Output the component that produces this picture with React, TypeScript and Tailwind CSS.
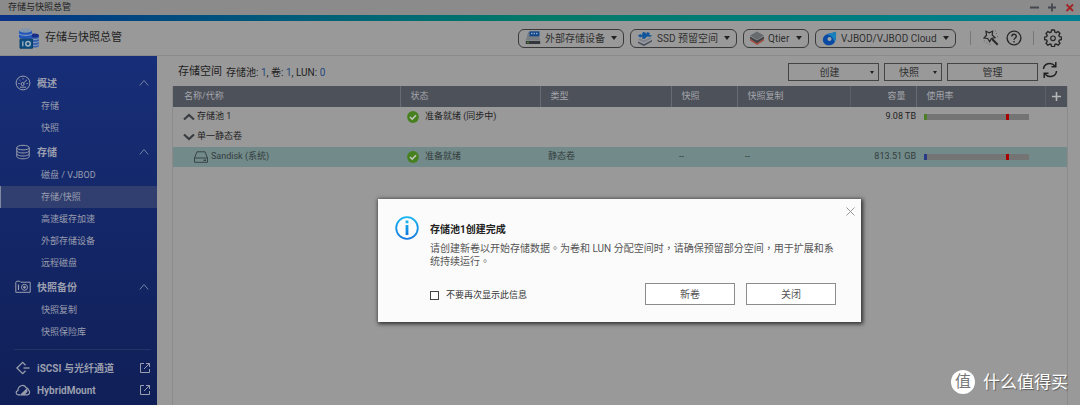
import React from "react";

type IconProps = { className?: string };

const latinFirst = "font-['Roboto','Noto_Sans_CJK_SC',sans-serif]";

function Gauge() {
  return (
    <svg viewBox="0 0 16 16" className="size-4" fill="none" stroke="currentColor" aria-hidden="true">
      <circle cx="8" cy="8" r="6.9" />
      <path d="M3.2 8.6h1.4M4.4 5l.9.8M8 3.2v1.3M11.4 8.6h1.4" />
      <circle cx="7.6" cy="9" r="1.5" />
      <path d="M8.7 7.9 12 4.8M5 12.2h6" />
    </svg>
  );
}

function Disks() {
  return (
    <svg viewBox="0 0 16 16" className="size-4" fill="none" stroke="currentColor" aria-hidden="true">
      <ellipse cx="8" cy="3.6" rx="6.2" ry="2.3" />
      <path d="M1.8 3.6v9c0 1.2 2.8 2.2 6.2 2.2s6.2-1 6.2-2.2v-9" />
      <path d="M1.8 6.7C1.8 7.9 4.6 9 8 9s6.2-1.1 6.2-2.3M1.8 9.700c0 1.2 2.8 2.3 6.200 2.300s6.200-1.100 6.200-2.300" />
    </svg>
  );
}

function Backup() {
  return (
    <svg viewBox="0 0 16 16" className="size-4" fill="none" stroke="currentColor" aria-hidden="true">
      <path d="M.8 13.300V3.200l1-1h3l1 1h9.400v10.100z" />
      <path d="M3.500 5.500v5.500" strokeWidth="1.200" />
      <circle cx="9.500" cy="8.300" r="3" />
      <circle cx="9.500" cy="8.300" r="1" fill="currentColor" />
    </svg>
  );
}

function Iscsi() {
  return (
    <svg viewBox="0 0 16 16" className="size-4" fill="none" stroke="currentColor" strokeWidth="1.300" aria-hidden="true">
      <path d="M10.500 5.200 7.700 2.300 1.900 8l5.800 5.700 2.800-2.900" />
      <path d="M8.500 8h6" />
    </svg>
  );
}

function Hybrid() {
  return (
    <svg viewBox="0 0 16 16" className="size-4" fill="none" stroke="currentColor" strokeWidth="1.200" aria-hidden="true">
      <path d="M5 12.800H3.200C.6 12.400.4 9.200 2.900 8.600 3 3.500 8.800 1.700 11 5.600c1.800.2 2.400 1.300 2.700 2.700 1.700 1.400.9 4.300-1.300 4.500H8.800" />
      <path d="m6 12.800 5.800-5.700v2.500l-3 3.200z" fill="currentColor" />
    </svg>
  );
}

function External() {
  return (
    <svg viewBox="0 0 12 12" className="size-3" fill="none" stroke="currentColor" aria-hidden="true">
      <path d="M5 1.500H1.500v9h9V7M7 1.500h3.500V5M10.500 1.500 5 7" />
    </svg>
  );
}

function Chevron({ className }: IconProps) {
  return (
    <svg viewBox="0 0 10 8" className={className} fill="none" stroke="currentColor" aria-hidden="true">
      <path d="m.8 6.500 4.200-5 4.200 5" />
    </svg>
  );
}

function FoldArrow({ down = false }: { down?: boolean }) {
  return (
    <svg viewBox="0 0 12 8" className="h-2 w-3 shrink-0" fill="none" stroke="#393c40" strokeWidth="2.200" aria-hidden="true">
      <path d={down ? "M1 1.500 6 6l5-4.500" : "M1 6.500 6 2l5 4.500"} />
    </svg>
  );
}

function Logo() {
  return (
    <svg viewBox="0 0 20 21" className="h-[21px] w-5" aria-hidden="true">
      <path d="M10 7v11c1 2 9 2 10 0V7z" fill="#3a62ac" />
      <ellipse cx="15" cy="7.500" rx="5" ry="2" fill="#172b88" />
      <path d="M13 11c2 .8 5 .7 7-.5M13 14c2 .8 5 .7 7-.5M13 17c2 .8 5 .7 7-.5" stroke="#8aa0bd" fill="none" />
      <path d="M0 2.500v7c1 2 12 2 13 0v-7z" fill="#2356b8" />
      <ellipse cx="6.500" cy="2.500" rx="6.500" ry="2.200" fill="#8096ae" />
      <path d="M0 5.800c2 2 11 2 13 0" stroke="#7e9bc0" strokeWidth="1.200" fill="none" />
      <path d="M1 11.200h12.500v9H1z" fill="#0c4d80" stroke="#08416f" />
      <path d="M3.800 13.300v5" stroke="#a0b3c0" strokeWidth="1.300" />
      <circle cx="9" cy="15.700" r="2.200" stroke="#a0b3c0" strokeWidth="1.500" fill="none" />
    </svg>
  );
}

function DriveChip() {
  return (
    <svg viewBox="0 0 16 14" className="h-[14px] w-4" aria-hidden="true">
      <path d="M3.200 1h10l2 8.500H.8z" fill="#777d82" />
      <path d="M.8 10h14.400v3H.8z" fill="#33373b" />
      <path d="M4.500.3h10v5h-10z" fill="#12468b" />
      <path d="M6 2.500h1.500M8.500 2.500H10M11 2.500h1.500" stroke="#8ba5c5" strokeWidth="1.500" />
      <path d="M2.300 11.500h1.400" stroke="#56a622" strokeWidth="1.400" />
    </svg>
  );
}

function SsdChip() {
  return (
    <svg viewBox="0 0 16 15" className="h-[15px] w-4" aria-hidden="true">
      <path d="m1 10.500 6 2.800L15 9v1.500L7 15l-6-3z" fill="#454c5e" />
      <path d="m1 8.500 6 3L15 7l-2-.5L7 9.500 3 7.500z" fill="#7b828e" />
      <path d="M1 4.500 3.500 3l1 1.500L6 1l2.500.5L9 3l1.500-2L13 2.300 12 4l3 .2-1.500 1.600L10 5.500 7.500 8 5 7.500 5.500 5.500 3 6.500z" fill="#10559b" />
    </svg>
  );
}

function QtierChip() {
  return (
    <svg viewBox="0 0 14 14" className="size-[14px]" aria-hidden="true">
      <path d="m0 7.500 7 4 7-4v2L7 14 0 9.500z" fill="#a14f43" />
      <path d="m0 5.500 7 4 7-4v2L7 12 0 7.500z" fill="#3a3e43" />
      <path d="m0 4.500 7-4 7 4-7 4.500z" fill="#686b6e" />
    </svg>
  );
}

function CloudChip() {
  return (
    <svg viewBox="0 0 15 15" className="size-[15px]" aria-hidden="true">
      <path d="M14 .7C14 5 15 14.300 7 14.300.2 14.300-.8 6.500 3.500 4 6.500 1.800 10 2.700 14 .7z" fill="#0b4aa2" />
      <path d="M14 .7C14 4 14.500 8 12.500 11 11 6 9 4.500 5 3.200 8 2 11 2.200 14 .7z" fill="#1781bd" />
      <circle cx="7.500" cy="8" r="2" fill="#9ea7ae" />
    </svg>
  );
}

function Wand() {
  return (
    <svg viewBox="0 0 16 16" className="size-4" fill="none" stroke="#282828" strokeWidth="1.200" aria-hidden="true">
      <path d="m3 1.300 3.200 1.600L9.600 1.200 9.200 4.900 12 7.600l-3.700.8-1.600 3.400-2-3.300-3.700-.4 2.500-2.900z" />
      <path d="m9 9 5.700 5.700" strokeWidth="2" />
      <path d="M13 3.500h1M14 6.500h1M12 1h1M3.500 13h1M.8 11h1M6.500 14.500h1" strokeWidth="1" stroke="#666" />
    </svg>
  );
}

function Help() {
  return (
    <svg viewBox="0 0 16 16" className="size-4" fill="none" stroke="#282828" strokeWidth="1.400" aria-hidden="true">
      <circle cx="8" cy="8" r="6.900" />
      <path d="M5.800 6.500C5.800 3.500 10.300 3.500 10.300 6.300 10.300 8 8 8 8 9.800M8 11v1.500" />
    </svg>
  );
}

function Gear() {
  return (
    <svg viewBox="0 0 18 18" className="size-[18px]" fill="none" stroke="#282828" strokeWidth="1.400" strokeLinejoin="round" aria-hidden="true">
      <path d="M7.600 1h2.800l.5 2.200 1.300.5 1.900-1.200 1.900 1.900-1.200 1.900.5 1.300 2.200.5v2.400l-2.200.6-.5 1.300 1.200 1.900-1.900 1.900-1.900-1.200-1.300.5-.5 2.200H7.600l-.5-2.200-1.300-.5-1.900 1.200L2 14.300l1.200-1.900-.5-1.300-2.200-.6V8.100l2.200-.5.5-1.300L2 4.400l1.900-1.900 1.900 1.200 1.300-.5z" />
      <circle cx="9" cy="9.300" r="2.300" strokeWidth="1.200" />
    </svg>
  );
}

function Refresh() {
  return (
    <svg viewBox="0 0 16 18" className="h-[18px] w-4" fill="none" stroke="#222" strokeWidth="1.500" aria-hidden="true">
      <path d="M1.500 8C1.800 2.500 9 .3 13 5M13.800 1v4.700H9.500M14.500 10C14.200 15.500 7 17.700 3 13M2.200 17v-4.700h4.300" />
    </svg>
  );
}

function Check() {
  return (
    <svg viewBox="0 0 12 12" className="size-3 shrink-0" aria-hidden="true">
      <circle cx="6" cy="6" r="5.900" fill="#47801f" />
      <path d="m3 6 2.200 2.200L9 4.200" stroke="#c0c8bb" strokeWidth="1.600" fill="none" />
    </svg>
  );
}

function Drive() {
  return (
    <svg viewBox="0 0 14 12" className="h-3 w-[14px] shrink-0" fill="none" stroke="#39444a" aria-hidden="true">
      <path d="M.5 7 3 .8h8L13.500 7v4.300H.5zM.5 7h13" />
      <path d="M9.500 9.300H12" strokeWidth="1.500" />
    </svg>
  );
}

function Caret({ small = false }: { small?: boolean }) {
  return (
    <span
      aria-hidden="true"
      className={
        small
          ? "size-0 border-x-2 border-t-[3px] border-x-transparent border-t-[#222]"
          : "size-0 border-x-[3px] border-t-4 border-x-transparent border-t-[#222]"
      }
    />
  );
}

const groups = [
  { title: "概述", icon: <Gauge />, items: ["存储", "快照"] },
  { title: "存储", icon: <Disks />, items: ["磁盘 / VJBOD", "存储/快照", "高速缓存加速", "外部存储设备", "远程磁盘"] },
  { title: "快照备份", icon: <Backup />, items: ["快照复制", "快照保险库"] },
];

function Sidebar() {
  return (
    <nav className="w-[157px] shrink-0 bg-linear-to-b from-[#172e78] to-[#101f57] pt-[14px] text-[#9a9eae]">
      {groups.map((g) => (
        <section key={g.title}>
          <button className="flex h-[25px] w-full items-center pr-2 pl-[15px] text-[10px] font-bold">
            {g.icon}
            <span className="ml-[6px] flex-1 pt-px text-left">{g.title}</span>
            <Chevron className="h-2 w-[10px] text-[#7480a3]" />
          </button>
          <ul>
            {g.items.map((item) => (
              <li key={item}>
                <a
                  href="#"
                  className={
                    item === "存储/快照"
                      ? "flex h-[22px] items-center border-l border-[#8087a0] bg-[#303f6f] pt-[2px] pl-10 text-[9px]"
                      : "flex h-[22px] items-center pt-[2px] pl-[41px] text-[9px]"
                  }
                >
                  {item}
                </a>
              </li>
            ))}
          </ul>
        </section>
      ))}
      <div className="mx-[6px] mt-[6px] ml-[14px] border-t border-[#243365] pt-[7px]">
        {[
          { name: "iSCSI 与光纤通道", icon: <Iscsi /> },
          { name: "HybridMount", icon: <Hybrid /> },
        ].map((l) => (
          <a key={l.name} href="#" className="flex h-[22px] items-center pl-px text-[10px] font-bold">
            {l.icon}
            <span className="ml-[6px] flex-1">{l.name}</span>
            <External />
          </a>
        ))}
      </div>
    </nav>
  );
}

function Chip({ icon, label, width }: { icon: React.ReactNode; label: string; width: string }) {
  return (
    <button className={`flex h-[19px] items-center rounded-md border border-[#3a3a3a] pr-[6px] pl-[6px] text-[10px] text-[#303030] ${width}`}>
      {icon}
      <span className="flex-1 pl-1 text-left whitespace-nowrap">{label}</span>
      <Caret />
    </button>
  );
}

function Usage({ color }: { color: string }) {
  return (
    <div className="flex h-[6px] w-[105px] bg-[#747474]">
      <span className={`w-[3px] ${color}`} />
      <span className="ml-[79px] w-[3px] bg-[#a80000]" />
    </div>
  );
}

function StorageTable() {
  const head = "border-l border-[#686c75] pt-px pl-[10px] text-left font-normal";
  return (
    <table className="w-full table-fixed border-collapse text-[9px] whitespace-nowrap text-[#222]">
      <colgroup>
        <col />
        <col className="w-[140px]" />
        <col className="w-[131px]" />
        <col className="w-[66px]" />
        <col className="w-[113px]" />
        <col className="w-[66px]" />
        <col className="w-[129px]" />
        <col className="w-[22px]" />
      </colgroup>
      <thead className="bg-[#4d515a] text-[#a4a6ab]">
        <tr className="h-[21px]">
          <th className="pt-px pl-[11px] text-left font-normal">名称/代称</th>
          <th className={head}>状态</th>
          <th className={head}>类型</th>
          <th className={head}>快照</th>
          <th className={head}>快照复制</th>
          <th className="border-l border-[#5b5f68] pt-px pr-[10px] text-right font-normal">容量</th>
          <th className={head}>使用率</th>
          <th className="border-l border-[#5b5f68]">
            <button aria-label="添加列" className="flex w-full items-center justify-center">
              <svg viewBox="0 0 9 9" className="size-[9px]" stroke="#b5b6b8" strokeWidth="1.600" aria-hidden="true">
                <path d="M4.500 0v9M0 4.500h9" />
              </svg>
            </button>
          </th>
        </tr>
      </thead>
      <tbody>
        <tr className="h-5">
          <td className="pl-[10px]">
            <div className="flex items-center gap-[2px]"><FoldArrow />存储池 1</div>
          </td>
          <td className="pl-[7px]">
            <div className="flex items-center gap-[6px]"><Check />准备就绪 (同步中)</div>
          </td>
          <td /><td /><td />
          <td className="text-right">9.08 TB</td>
          <td className="pl-2"><Usage color="bg-[#4b7f25]" /></td>
          <td />
        </tr>
        <tr className="h-5">
          <td className="pl-[10px]">
            <div className="flex items-center gap-[2px]"><FoldArrow down />单一静态卷</div>
          </td>
          <td /><td /><td /><td /><td /><td /><td />
        </tr>
        <tr className="h-5 bg-[#728a89] text-[#333d3e]">
          <td className="pl-[21px]">
            <div className="flex items-center gap-[3px]"><Drive />Sandisk (系统)</div>
          </td>
          <td className="pl-[7px]">
            <div className="flex items-center gap-[6px]"><Check />准备就绪</div>
          </td>
          <td className="pl-2">静态卷</td>
          <td className="pl-2">--</td>
          <td className="pl-2">--</td>
          <td className="text-right">813.51 GB</td>
          <td className="pl-2"><Usage color="bg-[#263a86]" /></td>
          <td />
        </tr>
      </tbody>
    </table>
  );
}

function Dialog() {
  return (
    <div className="absolute inset-0 flex items-start justify-center pt-[199px] pl-[159px]">
      <div
        role="dialog"
        aria-labelledby="dialog-title"
        className="flex w-[483px] items-start bg-[#fbfbfb] pt-[17px] pb-[17px] pl-[17px] shadow-[1px_1px_4px_1px_rgba(0,0,0,0.7)]"
      >
        <svg viewBox="0 0 24 24" className="size-6 shrink-0" aria-hidden="true">
          <defs>
            <linearGradient id="info" x1="0" y1="0" x2="0" y2="1">
              <stop stopColor="#18b5ef" />
              <stop offset="1" stopColor="#1279df" />
            </linearGradient>
          </defs>
          <circle cx="12" cy="12" r="10.800" fill="none" stroke="url(#info)" strokeWidth="1.800" />
          <path d="M10.600 4.500h2.800v2.800h-2.800zM10.600 9h2.800v10h-2.800z" fill="url(#info)" />
        </svg>
        <div className="ml-[11px] min-w-0 flex-1 pt-[7px] text-[10px] text-[#555]">
          <h2 id="dialog-title" className="leading-[14px] font-bold text-[#222]">存储池1创建完成</h2>
          <p className="mt-[5px] w-[410px] font-['Roboto','Noto_Sans_CJK_TC',sans-serif] leading-[13px]">
            请创建新卷以开始存储数据。为卷和 LUN 分配空间时，请确保预留部分空间，用于扩展和系统持续运行。
          </p>
          <div className="mt-[15px] flex items-center pr-[25px]">
            <label className="flex items-center gap-[7px] pt-[3px] text-[9px] text-[#333]">
              <input type="checkbox" className="size-[9px] appearance-none border border-[#444] bg-white" />
              不要再次显示此信息
            </label>
            <div className="ml-auto flex gap-[11px]">
              <button className="h-[22px] w-[90px] border border-[#8c8c8c] bg-white">新卷</button>
              <button className="h-[22px] w-[90px] border border-[#8c8c8c] bg-white">关闭</button>
            </div>
          </div>
        </div>
        <button aria-label="关闭对话框" className="absolute mt-[-9px] ml-[451px]">
          <svg viewBox="0 0 9 9" className="size-[9px]" stroke="#999" aria-hidden="true">
            <path d="m.5.500 8 8M8.500.500l-8 8" />
          </svg>
        </button>
      </div>
    </div>
  );
}

export default function App() {
  const tool = "flex h-[18px] items-center border border-[#444] text-[10px] text-[#303030]";
  return (
    <div className={`relative flex min-h-screen flex-col bg-[#999] text-[#222] ${latinFirst}`}>
      <div className="flex h-[15px] items-center bg-[#8b8b8b] pr-[6px] pl-2 text-[9px]">
        <span className="flex-1">存储与快照总管</span>
        <svg viewBox="0 0 44 9" className="h-[9px] w-11" strokeWidth="1.800" fill="none" aria-hidden="true">
          <path d="M0 4.500h9M18 4.500h8M22 .500v8" stroke="#45494f" />
          <path d="m36.500 1.500 6.500 6.500M43 1.500l-6.500 6.500" stroke="#a32226" />
        </svg>
      </div>
      <div className="h-[6px] bg-linear-to-r from-[#0b3186] via-[#067a68] to-[#007f91]" />
      <header className="flex h-[35px] items-center border-b border-[#8a8a8a] pr-[18px] pl-[19px]">
        <Logo />
        <h1 className="ml-[6px] flex-1 text-[11px]">存储与快照总管</h1>
        <div className="flex gap-[6px]">
          <Chip icon={<DriveChip />} label="外部存储设备" width="w-[106px]" />
          <Chip icon={<SsdChip />} label="SSD 预留空间" width="w-[107px]" />
          <Chip icon={<QtierChip />} label="Qtier" width="w-[66px]" />
          <Chip icon={<CloudChip />} label="VJBOD/VJBOD Cloud" width="w-[141px]" />
        </div>
        <span className="ml-[14px] h-[14px] w-px bg-[#777]" />
        <button aria-label="工具" className="ml-3"><Wand /></button>
        <button aria-label="帮助" className="ml-[7px]"><Help /></button>
        <span className="ml-[11px] h-[14px] w-px bg-[#777]" />
        <button aria-label="设置" className="ml-[10px]"><Gear /></button>
      </header>
      <div className="flex flex-1">
        <Sidebar />
        <main className="flex min-w-0 flex-1 flex-col pr-3 pl-[15px]">
          <div className="flex h-[30px] items-center pt-[2px] pl-[6px]">
            <h2 className="text-[11px]">存储空间</h2>
            <p className="ml-1 flex-1 text-[10px]">
              存储池: <span className="text-[#24477a]">1</span>, 卷: <span className="text-[#24477a]">1</span>, LUN:{" "}
              <span className="text-[#24477a]">0</span>
            </p>
            <div className="flex gap-[5px]">
              <button className={`${tool} w-[91px] pr-1`}><span className="flex-1">创建</span><Caret small /></button>
              <button className={`${tool} w-[58px] pr-1`}><span className="flex-1">快照</span><Caret small /></button>
              <button className={`${tool} w-[91px] justify-center`}>管理</button>
            </div>
            <button aria-label="刷新" className="mr-[10px] ml-1 pb-1"><Refresh /></button>
          </div>
          <div className="flex-1 border-x border-[#8b8b8b]">
            <StorageTable />
          </div>
        </main>
      </div>
      <Dialog />
      <div className="absolute right-3 bottom-[11px] flex items-center gap-2 text-[17px] leading-6 text-white text-shadow-[1px_1px_1px_rgba(0,0,0,0.4)]">
        <span className="flex size-6 items-center justify-center rounded-full bg-white text-[16px] text-[#777] text-shadow-none">值</span>
        <span>什么值得买</span>
      </div>
    </div>
  );
}
